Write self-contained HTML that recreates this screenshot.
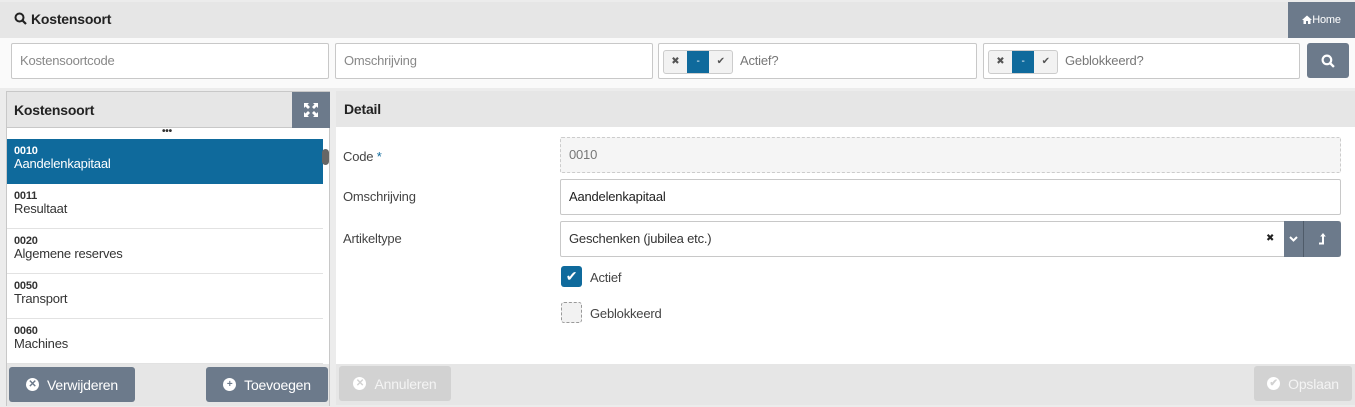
<!DOCTYPE html>
<html><head><meta charset="utf-8"><style>
*{box-sizing:border-box;margin:0;padding:0}
body{width:1355px;height:407px;background:#ececec;font-family:"Liberation Sans",sans-serif;font-size:13px;color:#333;position:relative;overflow:hidden;letter-spacing:-0.2px}
.a{position:absolute}
.inp{position:absolute;background:#fff;border:1px solid #c8c8c8;border-radius:2px;height:36px;color:#888;font-size:13px;line-height:34px;padding-left:8px}
.btn{position:absolute;background:#6c7a8b;color:#fff;border-radius:3px;font-size:14px;display:flex;align-items:center;justify-content:center;gap:8px}
.tri{position:absolute;top:6px;left:4px;width:70px;height:24px;border:1px solid #ccc;border-radius:3px;background:#f2f2f2;display:flex;font-size:10px;color:#555}
.tri span{flex:1;display:flex;align-items:center;justify-content:center}
.row{position:absolute;left:0;width:316px;height:45px;border-bottom:1px solid #e2e2e2;padding:6px 7px;font-size:13px;line-height:14px;background:#fff}
.row b{font-size:11px;display:block;line-height:12px}
.lbl{position:absolute;left:343px;font-size:13px;color:#444}
.circ{display:inline-block;width:13px;height:13px;border-radius:50%;background:#fff;color:#6c7a8b;font-size:10px;line-height:13px;text-align:center;font-weight:bold}
</style></head><body>
<div class="a" style="left:0;top:2px;width:1355px;height:36px;background:#e6e6e6"></div>
<div class="a" style="left:14px;top:11px;font-size:14px;font-weight:bold;color:#222">
<svg width="13" height="13" viewBox="0 0 13 13" style="vertical-align:-1px;margin-right:4px"><circle cx="5.5" cy="5.5" r="4" fill="none" stroke="#222" stroke-width="2"/><line x1="8.5" y1="8.5" x2="12" y2="12" stroke="#222" stroke-width="2.2"/></svg>Kostensoort</div>
<div class="a" style="left:1288px;top:2px;width:67px;height:36px;background:#6c7a8b;color:#fff;font-size:11px;line-height:36px;text-align:center"><svg width="10" height="9" viewBox="0 0 10 9" style="vertical-align:-1px"><path d="M0 5L5 0.5L10 5H8.5V9H6V6H4V9H1.5V5Z" fill="#fff"/></svg>Home</div>
<div class="a" style="left:0;top:38px;width:1355px;height:50px;background:#fafafa"></div>
<div class="inp" style="left:11px;top:43px;width:318px">Kostensoortcode</div>
<div class="inp" style="left:335px;top:43px;width:318px">Omschrijving</div>
<div class="inp" style="left:658px;top:43px;width:319px;padding-left:81px;color:#777">Actief?<div class="tri"><span>✖</span><span style="background:#0f6a9c;color:#fff">-</span><span>✔</span></div></div>
<div class="inp" style="left:983px;top:43px;width:317px;padding-left:81px;color:#777">Geblokkeerd?<div class="tri"><span>✖</span><span style="background:#0f6a9c;color:#fff">-</span><span>✔</span></div></div>
<div class="btn" style="left:1307px;top:43px;width:42px;height:35px"><svg width="14" height="14" viewBox="0 0 13 13"><circle cx="5.5" cy="5.5" r="4" fill="none" stroke="#fff" stroke-width="2"/><line x1="8.5" y1="8.5" x2="12" y2="12" stroke="#fff" stroke-width="2.2"/></svg></div>

<div class="a" style="left:6px;top:91px;width:324px;height:315px;background:#fff;border:1px solid #c8c8c8">
<div class="a" style="left:0;top:0;width:322px;height:36px;background:#e6e6e6;border-bottom:1px solid #c8c8c8;font-weight:bold;font-size:14px;line-height:36px;padding-left:7px;color:#222">Kostensoort</div>
<div class="a" style="left:285px;top:0;width:38px;height:36px;background:#6c7a8b;"><svg class="a" style="left:12px;top:11px" width="14" height="14" viewBox="0 0 14 14" fill="#fff"><path d="M0 0H5L3.5 1.5L6 4L4 6L1.5 3.5L0 5Z M14 0V5L12.5 3.5L10 6L8 4L10.5 1.5L9 0Z M0 14V9L1.5 10.5L4 8L6 10L3.5 12.5L5 14Z M14 14H9L10.5 12.5L8 10L10 8L12.5 10.5L14 9Z"/></svg></div>
<div class="a" style="left:155px;top:34px;font-size:10px;font-weight:bold">•••</div>
<div class="row" style="top:47px;background:#0f6a9c;color:#fff;border:none"><b>0010</b>Aandelenkapitaal</div>
<div class="row" style="top:92px"><b>0011</b>Resultaat</div>
<div class="row" style="top:137px"><b>0020</b>Algemene reserves</div>
<div class="row" style="top:182px"><b>0050</b>Transport</div>
<div class="row" style="top:227px"><b>0060</b>Machines</div>
<div class="a" style="left:315px;top:57px;width:7px;height:16px;background:#666;border-radius:4px"></div>
<div class="a" style="left:0;top:272px;width:322px;height:42px;background:#e6e6e6"></div>
<div class="btn" style="left:2px;top:275px;width:126px;height:35px"><span class="circ">✕</span>Verwijderen</div>
<div class="btn" style="left:199px;top:275px;width:122px;height:35px"><span class="circ">+</span>Toevoegen</div>
</div>

<div class="a" style="left:336px;top:91px;width:1019px;height:36px;background:#e6e6e6;font-weight:bold;font-size:14px;line-height:36px;padding-left:8px;color:#222">Detail</div>
<div class="a" style="left:336px;top:127px;width:1019px;height:237px;background:#fff"></div>
<div class="lbl" style="top:149px">Code <span style="color:#0f6a9c">*</span></div>
<div class="inp" style="left:560px;top:137px;width:781px;background:#f5f5f5;border:1px dashed #ccc;color:#777">0010</div>
<div class="lbl" style="top:189px">Omschrijving</div>
<div class="inp" style="left:560px;top:179px;width:781px;color:#222">Aandelenkapitaal</div>
<div class="lbl" style="top:231px">Artikeltype</div>
<div class="inp" style="left:560px;top:221px;width:781px;color:#333">Geschenken (jubilea etc.)<span class="a" style="left:705px;top:0;font-size:10px;color:#222">✖</span></div>
<div class="a" style="left:1284px;top:221px;width:57px;height:36px;background:#6c7a8b;border-radius:0 3px 3px 0;display:flex">
<span style="width:20px;border-right:1px solid #4f5b69;display:flex;align-items:center;justify-content:center"><svg width="9" height="6" viewBox="0 0 9 6"><path d="M1 1L4.5 4.5L8 1" stroke="#fff" stroke-width="2" fill="none"/></svg></span>
<span style="flex:1;display:flex;align-items:center;justify-content:center"><svg width="9" height="12" viewBox="0 0 9 12"><path d="M1 9.5H4V3.5H2.2L5 0L7.8 3.5H6V11.5H1Z" fill="#fff"/></svg></span></div>
<div class="a" style="left:561px;top:266px;width:21px;height:21px;background:#0f6a9c;border-radius:3px;color:#fff;text-align:center;line-height:21px;font-size:14px">✔</div>
<div class="lbl" style="left:590px;top:270px">Actief</div>
<div class="a" style="left:561px;top:302px;width:21px;height:21px;background:#f2f2f2;border:1px dashed #999;border-radius:3px"></div>
<div class="lbl" style="left:590px;top:306px">Geblokkeerd</div>
<div class="a" style="left:336px;top:364px;width:1019px;height:41px;background:#e6e6e6"></div>
<div class="btn" style="left:339px;top:366px;width:112px;height:35px;background:#d2d2d2;color:#f4f4f4"><span class="circ" style="color:#d2d2d2">✕</span>Annuleren</div>
<div class="btn" style="left:1254px;top:366px;width:98px;height:35px;background:#d2d2d2;color:#f4f4f4"><span class="circ" style="color:#d2d2d2">✔</span>Opslaan</div>
</body></html>
